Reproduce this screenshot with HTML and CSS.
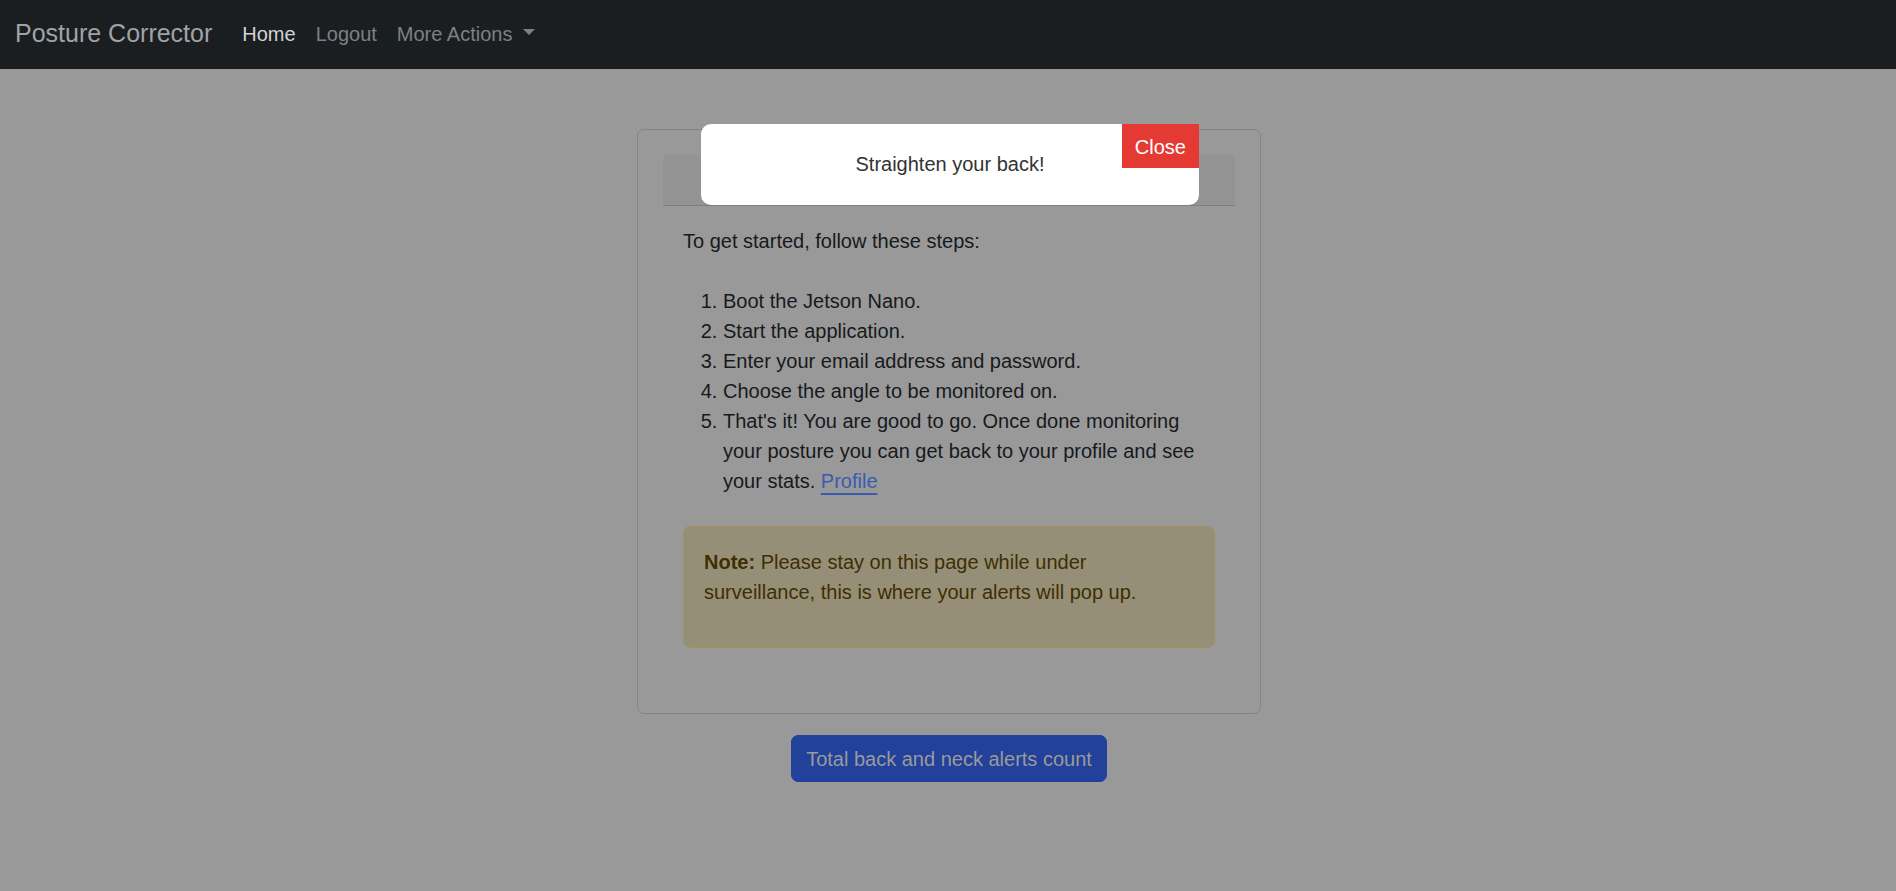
FILE: index.html
```html
<!DOCTYPE html>
<html lang="en">
<head>
<meta charset="utf-8">
<title>Posture Corrector</title>
<link rel="stylesheet" href="styles.css">
</head>
<body>
<nav class="navbar">
  <a class="brand" href="#">Posture Corrector</a>
  <ul class="nav">
    <li><a class="nav-link active" href="#">Home</a></li>
    <li><a class="nav-link" href="#">Logout</a></li>
    <li><a class="nav-link dropdown-toggle" href="#">More Actions</a></li>
  </ul>
</nav>
<main class="main">
  <div class="card">
    <div class="card-header"></div>
    <div class="card-body">
      <p class="intro">To get started, follow these steps:</p>
      <ol class="steps">
        <li>Boot the Jetson Nano.</li>
        <li>Start the application.</li>
        <li>Enter your email address and password.</li>
        <li>Choose the angle to be monitored on.</li>
        <li>That's it! You are good to go. Once done monitoring your posture you can get back to your profile and see your stats. <a href="#">Profile</a></li>
      </ol>
      <div class="alert">
        <p><strong>Note:</strong> Please stay on this page while under surveillance, this is where your alerts will pop up.</p>
      </div>
    </div>
  </div>
  <button class="btn" type="button">Total back and neck alerts count</button>
</main>
<div class="popup">
  <p class="popup-text">Straighten your back!</p>
  <button class="close" type="button">Close</button>
</div>
</body>
</html>
```

FILE: styles.css
```css
html, body {
  margin: 0;
  padding: 0;
}

body {
  background: #999999;
  font-family: "Liberation Sans", Arial, sans-serif;
  font-size: 20px;
  line-height: 30px;
  color: #17191c;
}

.navbar {
  display: flex;
  align-items: center;
  height: 69px;
  box-sizing: border-box;
  padding: 0 15px 2px;
  background: #1b1e21;
}

.brand {
  font-size: 25px;
  line-height: 37.5px;
  color: #a0a3a6;
  margin-right: 20px;
  text-decoration: none;
}

.nav {
  list-style: none;
  margin: 0;
  padding: 0;
  display: flex;
}

.nav-link {
  display: block;
  padding: 1px 10px 0;
  line-height: 30px;
  color: #7d8084;
  text-decoration: none;
}

.nav-link.active {
  color: #d2d3d4;
}

.dropdown-toggle::after {
  content: "";
  display: inline-block;
  margin-left: 11px;
  vertical-align: 6px;
  border-top: 6px solid #7d8084;
  border-left: 6px solid transparent;
  border-right: 6px solid transparent;
}

.main {
  display: flex;
  flex-direction: column;
  align-items: center;
  padding-top: 60px;
  padding-left: 2px;
}

.card {
  width: 624px;
  box-sizing: border-box;
  border: 1px solid #848484;
  border-radius: 7px;
  padding: 25px;
}

.card-header {
  height: 50px;
  background: #939393;
  border-bottom: 1px solid #7e7e7e;
  border-radius: 5px 5px 0 0;
}

.card-body {
  padding: 20px;
}

.intro {
  margin: 0 0 30px;
}

.steps {
  margin: 0 0 30px;
  padding-left: 40px;
}

.steps a {
  color: #3a5bb2;
  text-decoration: underline;
  text-decoration-thickness: 2px;
  text-underline-offset: 5px;
}

.alert {
  padding: 20px;
  border: 1px solid #a0935f;
  border-radius: 7px;
  background: #968f77;
  color: #3d2e04;
  margin-bottom: 20px;
}

.alert p {
  margin: 0 0 20px;
}

.btn {
  margin-top: 21px;
  padding: 7.5px 14px;
  font-family: inherit;
  font-size: 20px;
  line-height: 30px;
  background: #21419a;
  color: #9a9a9a;
  border: 1px solid #21419a;
  border-radius: 7px;
}

.popup {
  position: fixed;
  top: 124px;
  left: 50%;
  margin-left: -247px;
  width: 498px;
  box-sizing: border-box;
  padding: 29px 20px;
  background: #ffffff;
  border-radius: 10px;
  text-align: center;
  color: #333333;
  line-height: 23px;
}

.popup-text {
  margin: 0;
}

.close {
  position: absolute;
  top: 0;
  right: 0;
  margin: 0;
  padding: 11px 13px 9px;
  border: 0;
  background: #e53a33;
  color: #ffffff;
  font-family: inherit;
  font-size: 20px;
  line-height: 24px;
}
```
